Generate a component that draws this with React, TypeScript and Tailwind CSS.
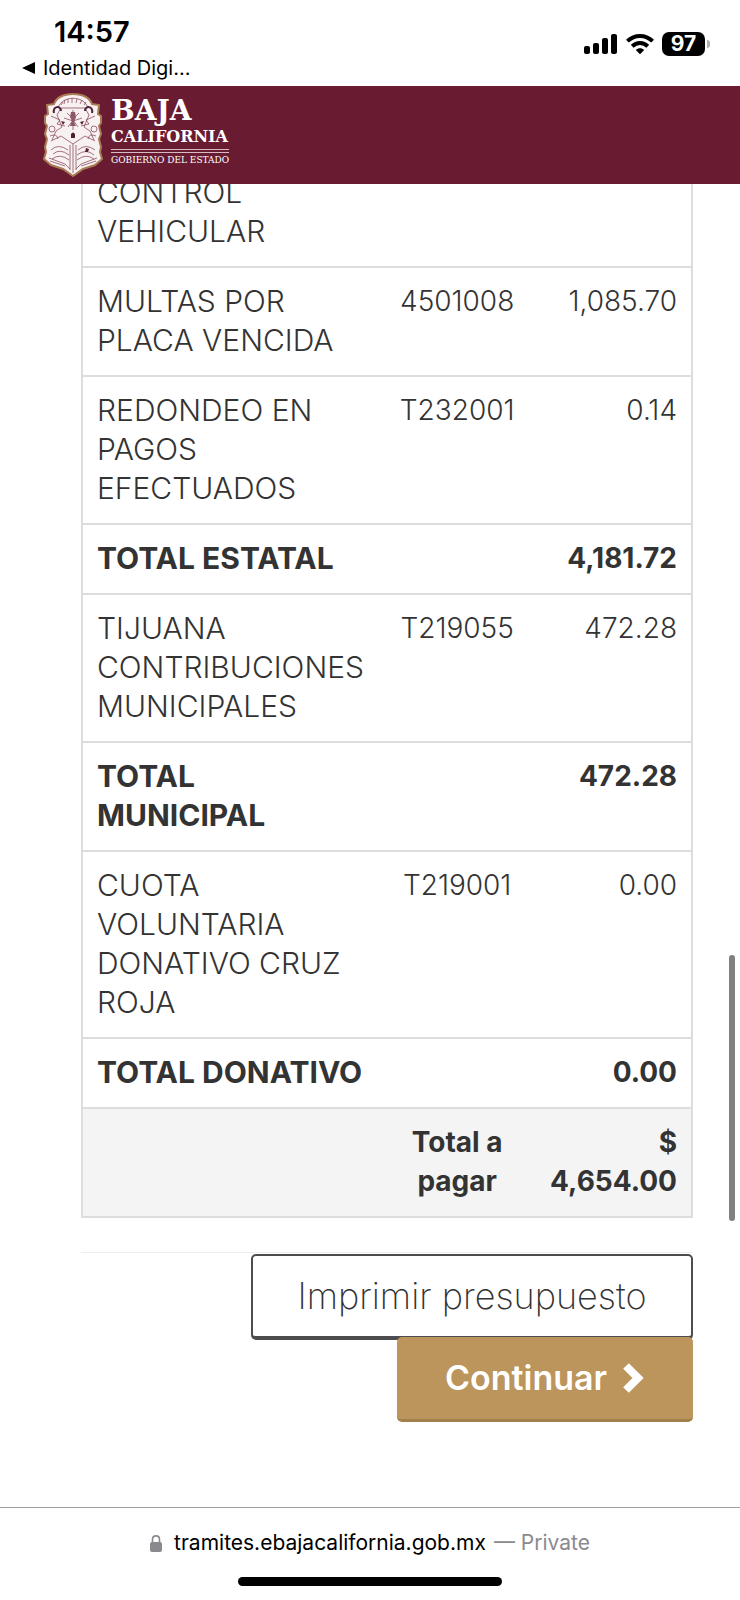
import React from 'react';

type Row = { concept: string; code?: string; amount: string; total?: boolean };

const rows: Row[] = [
  { concept: 'CONTROL\nVEHICULAR', amount: '' },
  { concept: 'MULTAS POR\nPLACA VENCIDA', code: '4501008', amount: '1,085.70' },
  { concept: 'REDONDEO EN\nPAGOS\nEFECTUADOS', code: 'T232001', amount: '0.14' },
  { concept: 'TOTAL ESTATAL', amount: '4,181.72', total: true },
  { concept: 'TIJUANA\nCONTRIBUCIONES\nMUNICIPALES', code: 'T219055', amount: '472.28' },
  { concept: 'TOTAL\nMUNICIPAL', amount: '472.28', total: true },
  { concept: 'CUOTA\nVOLUNTARIA\nDONATIVO CRUZ\nROJA', code: 'T219001', amount: '0.00' },
  { concept: 'TOTAL DONATIVO', amount: '0.00', total: true },
];

function Signal() {
  return (
    <svg width="34" height="22" viewBox="0 0 34 22" aria-hidden="true">
      <rect x="0" y="13" width="6" height="8" rx="2" />
      <rect x="9" y="10" width="6" height="11" rx="2" />
      <rect x="18" y="5" width="6" height="16" rx="2" />
      <rect x="27" y="1" width="6" height="20" rx="2" />
    </svg>
  );
}

function Wifi() {
  return (
    <svg width="28" height="22" viewBox="0 0 28 22" aria-hidden="true" fill="none" stroke="#000" strokeWidth="4">
      <path d="M1.400 8.200C8.500 1.200 19.500 1.200 26.600 8.200" />
      <path d="M6.200 13.200C10.700 8.900 17.300 8.900 21.800 13.200" />
      <path d="M14 21.200L9.800 17C12.200 14.800 15.800 14.800 18.200 17Z" fill="#000" stroke="none" />
    </svg>
  );
}

function Crest() {
  return (
    <svg width="60" height="84" viewBox="0 0 60 84" role="img" aria-label="Escudo de Baja California">
      <path
        d="M30 1C40 1 47 5 49 11L56 12L55 21L58 23V30L56 33L58 41L56 46L58 54L57 59L59 66L52 72L40 76L30 83L20 76L8 72L1 66L3 59L2 54L4 46L2 41L4 33L2 30V23L5 21L4 12L11 11C13 5 20 1 30 1Z"
        fill="#f8f1f2" stroke="#a97b55" strokeWidth="2"
      />
      <g fill="none" stroke="#6a1b31" strokeWidth="0.7" opacity="0.85">
        <path d="M15 15C19 2 41 2 45 15" />
        <path d="M18 12l2-3M21 11l1-4M25 10V6M29 10V5M33 10l1-4M37 11l2-4M41 12l2-3" />
        <path d="M18 15H42L46 22L41 34L47 38L51 47M18 15L14 22L19 34L13 38L9 47" />
        <path d="M30 17V37M24 20L30 26L36 20M25 34L30 27L35 34M21 25L30 28L39 25" />
        <path d="M8 48L18 43L30 51L42 43L52 48M30 51V80M27 52V77M33 52V77" />
        <path d="M6 65L22 71L27 76M54 65L38 71L33 76M7 68L22 73M53 68L38 73" />
        <path d="M8 57Q15 50 25 57M10 61Q17 55 26 62M9 66Q17 60 26 67M35 57Q43 50 52 57M34 62Q43 55 51 62M34 67Q43 60 51 66" />
        <circle cx="9" cy="36" r="3" /><circle cx="51" cy="36" r="3" />
        <path d="M8 23L17 27L14 31L22 33M52 23L43 27L46 31L38 33M7 43Q14 40 15 46M53 43Q46 40 45 46" />
      </g>
      <path d="M11 20C9 13 18 12 18 18M49 20C51 13 42 12 42 18" fill="none" stroke="#4b2237" strokeWidth="2" />
      <path d="M28 45V41Q30 38 32 41V45Z" fill="#4b2237" />
      <path d="M28 19h4l1 5-2 5 2 4h-6l2-5-2-4Z" fill="#8f5868" />
      <path d="M43 55l3 1-1 3-3 0ZM18 28l4 1-2 3ZM41 28l-4 1 2 3Z" fill="#5b2138" />
    </svg>
  );
}

export default function App() {
  return (
    <div className="relative flex min-h-screen flex-col bg-white font-['Inter',sans-serif] text-[#333333]">
      <div className="flex h-[86px] items-start justify-between pl-[22px] pr-[30px] text-black">
        <div className="pt-4">
          <div className="pl-8 text-[29px] font-semibold leading-8">14:57</div>
          <a href="#volver" className="mt-1 flex items-center gap-2 text-[20px] leading-8">
            <svg width="13" height="12" viewBox="0 0 13 12" aria-hidden="true"><path d="M0 6L13 0V12Z" /></svg>
            Identidad Digi...
          </a>
        </div>
        <div className="flex items-center gap-2 pt-8">
          <Signal />
          <Wifi />
          <div className="flex items-center gap-[2px]">
            <span className="flex h-6 w-[43px] items-center justify-center rounded-[7px] bg-black text-[21px] font-bold leading-6 text-white">97</span>
            <span className="h-2 w-[3px] rounded-r-full bg-[#b0b0b0]" />
          </div>
        </div>
      </div>

      <header className="flex h-[98px] items-center gap-2 bg-[#691b31] pl-[43px] text-white">
        <Crest />
        <div className="flex flex-col pb-2 font-['DejaVu_Serif',serif] font-bold">
          <span className="text-[28px] leading-7">BAJA</span>
          <span className="mt-1 text-[16px] leading-4">CALIFORNIA</span>
          <span className="mb-px mt-1 h-1 border-y border-[#d9b9c2]" />
          <span className="text-[9px] font-normal leading-3">GOBIERNO DEL ESTADO</span>
        </div>
      </header>

      <main className="grow overflow-hidden pl-[81px] pr-[47px]">
        <table className="-mt-[27px] w-full table-fixed border-collapse border-2 border-[#dddddd] text-[28px] font-light leading-[39px]">
          <colgroup>
            <col className="w-[49%]" />
            <col className="w-[25%]" />
            <col className="w-[26%]" />
          </colgroup>
          <tbody>
            {rows.map((r) => (
              <tr key={r.concept} className={r.total ? 'border-b-2 border-[#dddddd] align-top font-bold' : 'border-b-2 border-[#dddddd] align-top'}>
                <td className="whitespace-pre pb-[15px] pl-[14px] pt-[14px] text-[30px]">{r.concept}</td>
                <td className="pt-[14px] text-center">{r.code}</td>
                <td className="pr-[14px] pt-[14px] text-right">{r.amount}</td>
              </tr>
            ))}
          </tbody>
          <tfoot>
            <tr className="bg-[#f4f4f4] align-top font-bold">
              <td />
              <td className="whitespace-pre pb-[15px] pt-[14px] text-center">{'Total a\npagar'}</td>
              <td className="whitespace-pre pr-[14px] pt-[14px] text-right">{'$\n4,654.00'}</td>
            </tr>
          </tfoot>
        </table>
        <div className="mt-[34px] flex flex-col items-end border-t border-[#eeeeee] pt-px">
          <button type="button" className="h-[86px] w-[442px] rounded-[5px] border-2 border-b-4 border-[#4d4d4f] bg-white text-[36px] font-extralight leading-10">
            Imprimir presupuesto
          </button>
          <button type="button" className="-mt-[3px] flex h-[85px] w-[296px] items-center justify-center gap-4 rounded-[5px] border-b-[3px] border-[#a27f4b] bg-[#bc955c] text-[34px] font-semibold leading-10 text-white">
            Continuar
            <svg width="22" height="30" viewBox="0 0 22 30" aria-hidden="true">
              <path d="M3 3L15 15L3 27" fill="none" stroke="#fff" strokeWidth="8" />
            </svg>
          </button>
        </div>
      </main>

      <div className="absolute right-[5px] top-[955px] h-[266px] w-[6px] rounded-full bg-[#808080]" />

      <footer className="flex h-[93px] flex-col items-center border-t border-[#a0a0a0] pt-[19px]">
        <div className="flex items-center text-[21px] leading-8 text-black">
          <svg className="mr-3" width="12" height="17" viewBox="0 0 12 17" aria-hidden="true">
            <rect x="0" y="7" width="12" height="10" rx="2" fill="#8a8a8e" />
            <path d="M2.500 8V4.500C2.500 -0.300 9.500 -0.300 9.500 4.500V8" fill="none" stroke="#8a8a8e" strokeWidth="1.600" />
          </svg>
          tramites.ebajacalifornia.gob.mx
          <span className="ml-2 text-[#8a8a8e]">— Private</span>
        </div>
        <div className="mt-[18px] h-[9px] w-[264px] rounded-full bg-black" />
      </footer>
    </div>
  );
}
